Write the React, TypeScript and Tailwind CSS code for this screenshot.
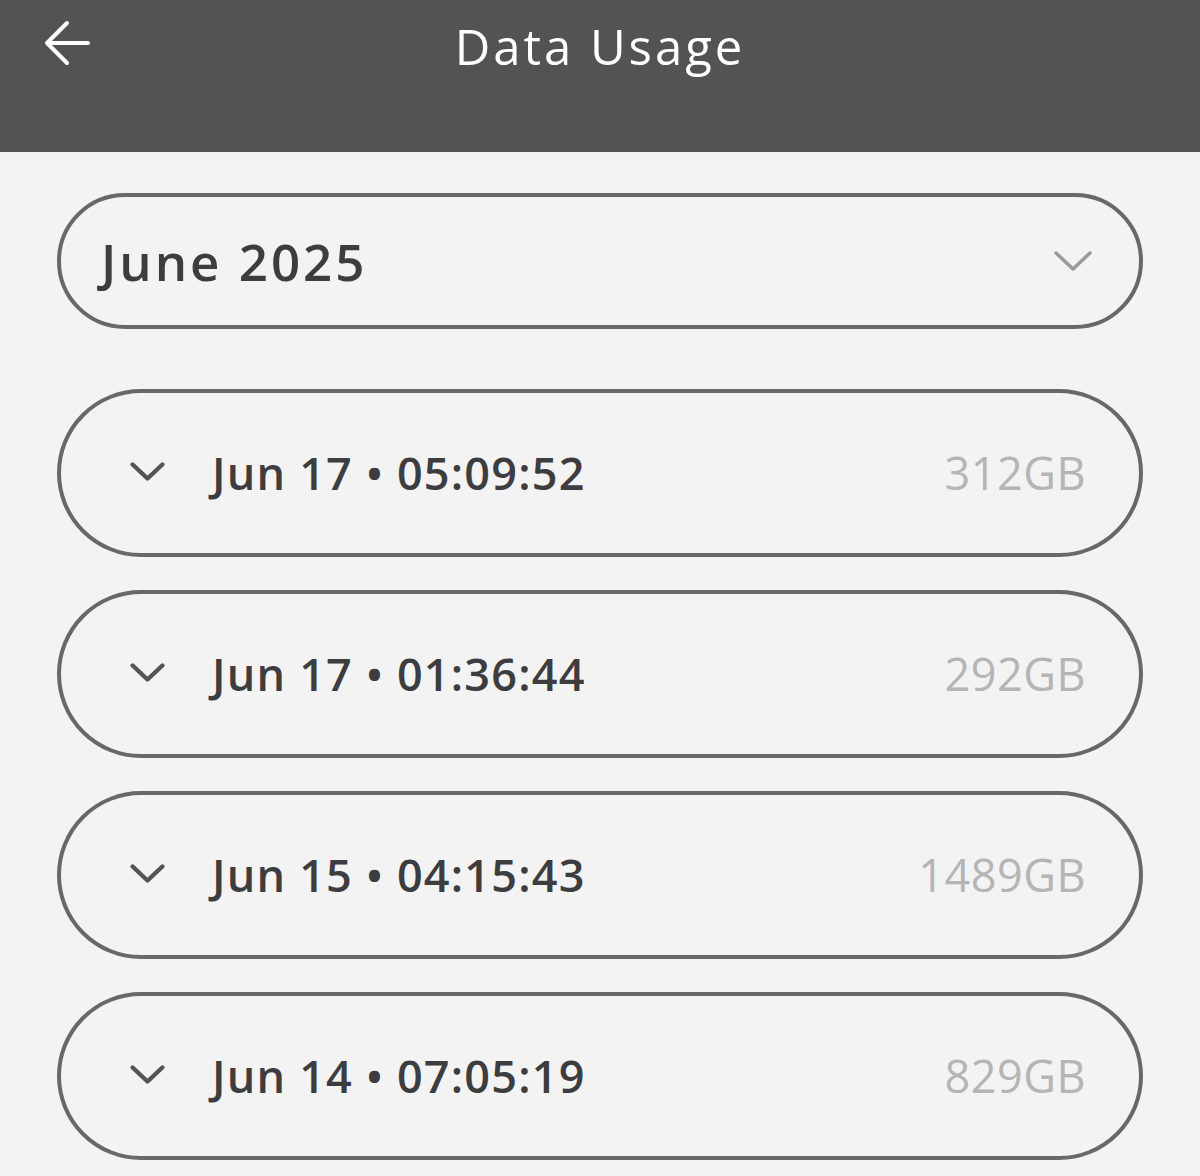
import React from "react";

const rows = [
    { date: "Jun 17", time: "05:09:52", usage: "312GB" },
    { date: "Jun 17", time: "01:36:44", usage: "292GB" },
    { date: "Jun 15", time: "04:15:43", usage: "1489GB" },
    { date: "Jun 14", time: "07:05:19", usage: "829GB" },
];

function Chevron({ className, stroke = 3.5 }: { className?: string; stroke?: number }) {
    return (
        <svg viewBox="0 0 40 22" fill="none" className={className}>
            <path d="M3 3 L20 19 L37 3" stroke="currentColor" strokeWidth={stroke} strokeLinecap="round" strokeLinejoin="round" />
        </svg>
    );
}

export default function App() {
    return (
        <div className="min-h-[1176px] w-full bg-[#f3f3f3] font-['Open_Sans',sans-serif]">
            {/* Header */}
            <header className="relative flex h-[152px] items-start justify-center bg-[#535355] pt-[14px]">
                <button className="absolute left-[43px] top-[20px] text-white">
                    <svg viewBox="0 0 48 46" width="48" height="46" fill="none">
                        <path d="M45 23 H5 M24 3 L4 23 L24 43" stroke="currentColor" strokeWidth="4" strokeLinecap="round" strokeLinejoin="round" />
                    </svg>
                </button>
                <h1 className="text-[49px] font-normal leading-[64px] tracking-[3px] text-white">Data Usage</h1>
            </header>

            <main className="flex flex-col px-[57px] pt-[41px]">
                {/* Month picker */}
                <div className="flex h-[136px] items-center justify-between rounded-full border-[4px] border-[#68686a] pl-[40px] pr-[46px]">
                    <span className="text-[51px] font-semibold tracking-[3px] text-[#3d3d3f]">June 2025</span>
                    <Chevron className="h-[22px] w-[40px] text-[#9a9a9a]" />
                </div>

                {/* Sessions */}
                <div className="mt-[60px] flex flex-col gap-[33px]">
                    {rows.map((r, i) => (
                        <div
                            key={i}
                            className="flex h-[168px] items-center rounded-full border-[4px] border-[#68686a] pl-[69px] pr-[53px]"
                        >
                            <Chevron className="mb-[3px] h-[21px] w-[35px] text-[#545456]" stroke={5} />
                            <span className="ml-[47px] text-[45px] font-semibold tracking-[1.2px] text-[#3d3d3f]">
                                {r.date} • {r.time}
                            </span>
                            <span className="ml-auto text-[45px] font-normal tracking-[0.5px] text-[#b5b5b5]">{r.usage}</span>
                        </div>
                    ))}
                </div>
            </main>
        </div>
    );
}
